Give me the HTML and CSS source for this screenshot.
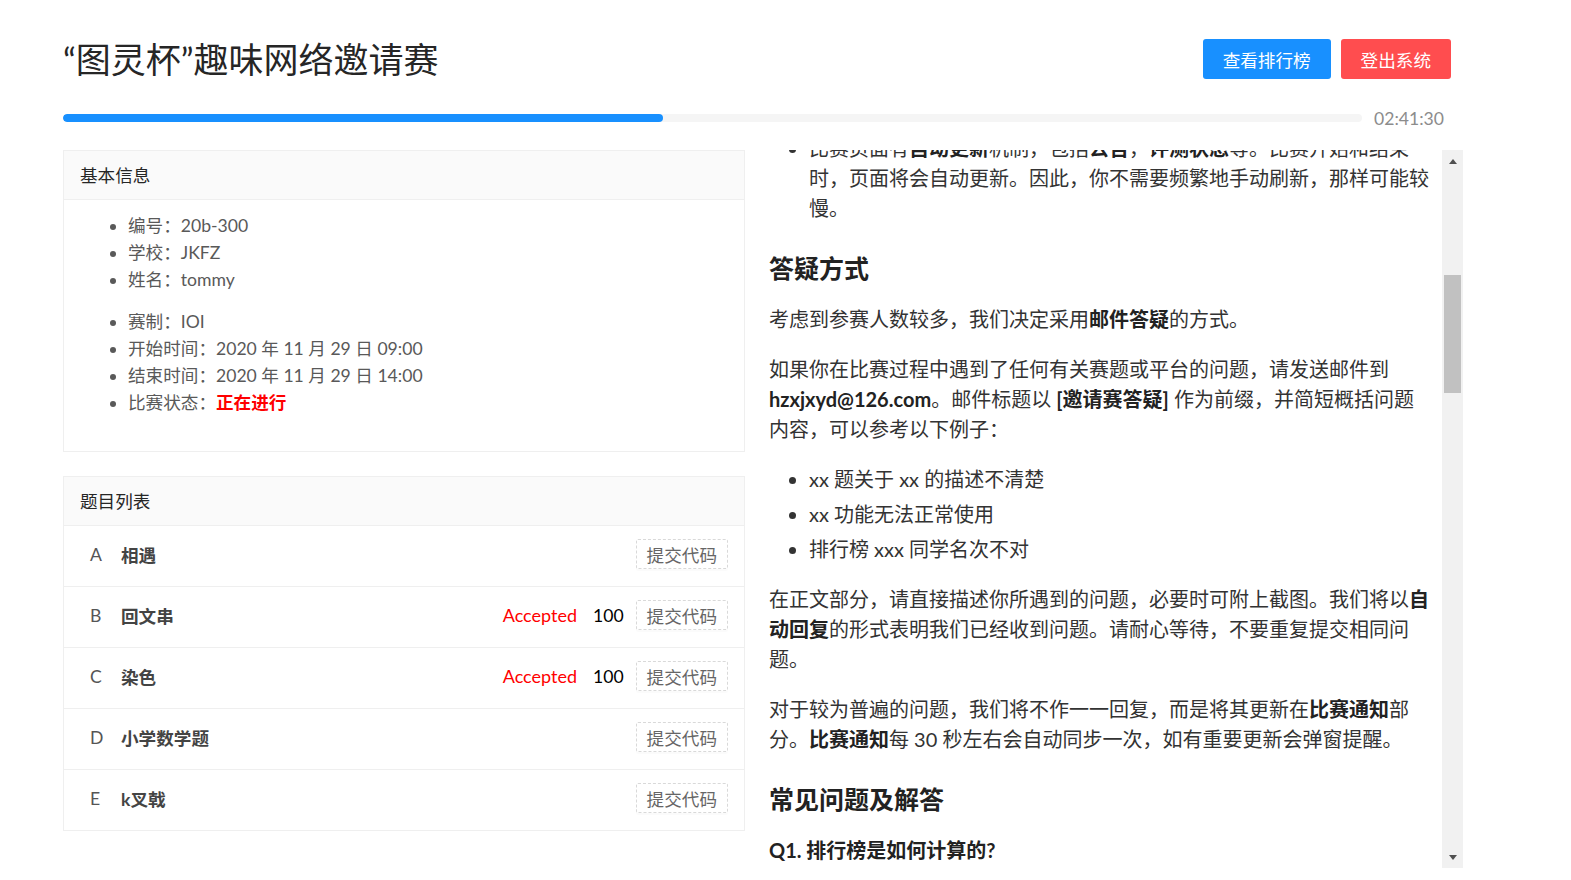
FILE: index.html
```html
<!DOCTYPE html>
<html lang="zh-CN">
<head>
<meta charset="utf-8">
<title>“图灵杯”趣味网络邀请赛</title>
<link rel="stylesheet" href="styles.css">
</head>
<body>
<div class="page">
  <header class="header">
    <h1 class="title">“图灵杯”趣味网络邀请赛</h1>
    <div class="actions">
      <button class="btn btn-primary">查看排行榜</button>
      <button class="btn btn-danger">登出系统</button>
    </div>
  </header>

  <div class="progress-row">
    <div class="progress-track"><div class="progress-fill" style="width:46.2%"></div></div>
    <div class="progress-time">02:41:30</div>
  </div>

  <main class="main">
    <section class="left">
      <div class="card info-card">
        <div class="card-head">基本信息</div>
        <div class="card-body">
          <ul class="info-list">
            <li>编号：20b-300</li>
            <li>学校：JKFZ</li>
            <li>姓名：tommy</li>
          </ul>
          <ul class="info-list">
            <li>赛制：IOI</li>
            <li>开始时间：2020 年 11 月 29 日 09:00</li>
            <li>结束时间：2020 年 11 月 29 日 14:00</li>
            <li>比赛状态：<strong class="status">正在进行</strong></li>
          </ul>
        </div>
      </div>

      <div class="card problem-card">
        <div class="card-head">题目列表</div>
        <div class="problem-row">
          <span class="p-id">A</span><span class="p-name">相遇</span>
          <span class="p-right"><button class="btn-submit">提交代码</button></span>
        </div>
        <div class="problem-row">
          <span class="p-id">B</span><span class="p-name">回文串</span>
          <span class="p-right"><span class="p-status">Accepted</span><span class="p-score">100</span><button class="btn-submit">提交代码</button></span>
        </div>
        <div class="problem-row">
          <span class="p-id">C</span><span class="p-name">染色</span>
          <span class="p-right"><span class="p-status">Accepted</span><span class="p-score">100</span><button class="btn-submit">提交代码</button></span>
        </div>
        <div class="problem-row">
          <span class="p-id">D</span><span class="p-name">小学数学题</span>
          <span class="p-right"><button class="btn-submit">提交代码</button></span>
        </div>
        <div class="problem-row">
          <span class="p-id">E</span><span class="p-name">k叉戟</span>
          <span class="p-right"><button class="btn-submit">提交代码</button></span>
        </div>
      </div>
    </section>

    <section class="right">
      <div class="viewport">
        <div class="doc">
          <ul class="doc-list first">
            <li>比赛页面有<strong>自动更新</strong>机制，包括<strong>公告</strong>，<strong>评测状态</strong>等。比赛开始和结束时，页面将会自动更新。因此，你不需要频繁地手动刷新，那样可能较慢。</li>
          </ul>
          <h2>答疑方式</h2>
          <p>考虑到参赛人数较多，我们决定采用<strong>邮件答疑</strong>的方式。</p>
          <p>如果你在比赛过程中遇到了任何有关赛题或平台的问题，请发送邮件到 <strong>hzxjxyd@126.com</strong>。邮件标题以 <strong>[邀请赛答疑]</strong> 作为前缀，并简短概括问题内容，可以参考以下例子：</p>
          <ul class="doc-list">
            <li>xx 题关于 xx 的描述不清楚</li>
            <li>xx 功能无法正常使用</li>
            <li>排行榜 xxx 同学名次不对</li>
          </ul>
          <p>在正文部分，请直接描述你所遇到的问题，必要时可附上截图。我们将以<strong>自动回复</strong>的形式表明我们已经收到问题。请耐心等待，不要重复提交相同问题。</p>
          <p>对于较为普遍的问题，我们将不作一一回复，而是将其更新在<strong>比赛通知</strong>部分。<strong>比赛通知</strong>每 30 秒左右会自动同步一次，如有重要更新会弹窗提醒。</p>
          <h2>常见问题及解答</h2>
          <h3>Q1. 排行榜是如何计算的?</h3>
          <p>排行榜按照总分从高到低排序。</p>
        </div>
      </div>
      <div class="scrollbar">
        <div class="sb-btn"><span class="tri-up"></span></div>
        <div class="sb-thumb"></div>
        <div class="sb-btn sb-bottom"><span class="tri-down"></span></div>
      </div>
    </section>
  </main>
</div>
</body>
</html>
```

FILE: styles.css
```css
* { box-sizing: border-box; }

html, body {
  margin: 0;
  padding: 0;
  background: #fff;
}

body {
  font-family: Lato, "Noto Sans CJK SC", sans-serif;
  color: #333;
  overflow: hidden;
}

.page {
  width: 1463px;
  padding: 39px 0 0 63px;
}

.header {
  display: flex;
  justify-content: space-between;
  align-items: center;
  height: 40px;
  padding-right: 12px;
}

.title {
  margin: 0;
  font-size: 35px;
  font-weight: 400;
  line-height: 40px;
  color: #262626;
}

.actions {
  display: flex;
  gap: 10px;
}

.btn {
  height: 40px;
  padding: 0 20px;
  border: none;
  border-radius: 3px;
  font-family: inherit;
  font-size: 17.6px;
  color: #fff;
  cursor: pointer;
}

.btn-primary { background: #1890ff; }
.btn-danger { background: #ff4d4f; }

.progress-row {
  display: flex;
  align-items: center;
  height: 20px;
  margin-top: 29px;
}

.progress-track {
  flex: 1;
  height: 8px;
  border-radius: 4px;
  background: #f5f5f5;
  overflow: hidden;
}

.progress-fill {
  height: 100%;
  border-radius: 4px;
  background: #1890ff;
}

.progress-time {
  width: 80px;
  padding-left: 12px;
  margin-right: 21px;
  font-size: 17.6px;
  color: #8c8c8c;
  white-space: nowrap;
}

.main {
  display: flex;
  height: 718px;
  margin-top: 22px;
}

.left {
  width: 682px;
  flex: none;
}

.card {
  border: 1px solid #efefef;
  background: #fff;
}

.card-head {
  height: 49px;
  padding: 0 16px 2px;
  display: flex;
  align-items: center;
  background: #fafafa;
  border-bottom: 1px solid #efefef;
  font-size: 17.6px;
  color: #262626;
}

.card-body {
  padding: 12px 24px 35px;
}

.info-list {
  margin: 0;
  padding-left: 40px;
  font-size: 17.6px;
  line-height: 27px;
  color: #595959;
}

.info-list + .info-list {
  margin-top: 15px;
}

.status {
  color: #f00;
  font-weight: 700;
}

.problem-card {
  margin-top: 24px;
}

.problem-row {
  display: flex;
  align-items: center;
  height: 61px;
  padding: 0 16px 4px 26px;
  border-bottom: 1px solid #efefef;
  font-size: 17.6px;
}

.problem-row:last-child {
  border-bottom: none;
  height: 60px;
}

.p-id {
  width: 31px;
  color: #555;
}

.p-name {
  font-weight: 700;
  color: #444;
}

.p-right {
  margin-left: auto;
  display: flex;
  align-items: center;
}

.p-status {
  color: #f00;
  margin-right: 16px;
  font-size: 18px;
}

.p-score {
  color: #000;
  margin-right: 12px;
}

.btn-submit {
  height: 30px;
  padding: 0 10px;
  border: 1px dashed #d9d9d9;
  border-radius: 2px;
  background: #fff;
  font-family: inherit;
  font-size: 17.6px;
  color: #666;
  box-shadow: 0 2px 0 rgba(0, 0, 0, 0.015);
}

.right {
  flex: 1;
  display: flex;
  min-width: 0;
}

.viewport {
  flex: 1;
  overflow: hidden;
  padding-left: 24px;
  padding-right: 12px;
}

.doc {
  margin-top: -17px;
  font-size: 20px;
  line-height: 30px;
  color: #333;
}

.doc strong {
  color: #222;
  font-weight: 700;
}

.doc p {
  margin: 20px 0 0;
}

.doc h2 + p {
  margin-top: 0;
}

.doc h2 {
  margin: 27px 0 18px;
  font-size: 25px;
  line-height: 36px;
  font-weight: 700;
  color: #222;
}

.doc h3 {
  margin: 16px 0 0;
  font-size: 20px;
  line-height: 30px;
  font-weight: 700;
  color: #222;
}

.doc-list {
  margin: 20px 0 0;
  padding-left: 40px;
}

.doc-list.first {
  margin-top: 0;
}

.doc-list li + li {
  margin-top: 5px;
}

.scrollbar {
  width: 21px;
  flex: none;
  background: #f1f1f1;
  display: flex;
  flex-direction: column;
}

.sb-btn {
  height: 22px;
  display: flex;
  align-items: center;
  justify-content: center;
}

.sb-bottom {
  margin-top: auto;
}

.tri-up {
  width: 0;
  height: 0;
  border-left: 4.5px solid transparent;
  border-right: 4.5px solid transparent;
  border-bottom: 5px solid #505050;
}

.tri-down {
  width: 0;
  height: 0;
  border-left: 4.5px solid transparent;
  border-right: 4.5px solid transparent;
  border-top: 5px solid #505050;
}

.sb-thumb {
  height: 118px;
  margin: 103px 2px 0;
  background: #c1c1c1;
}
```
